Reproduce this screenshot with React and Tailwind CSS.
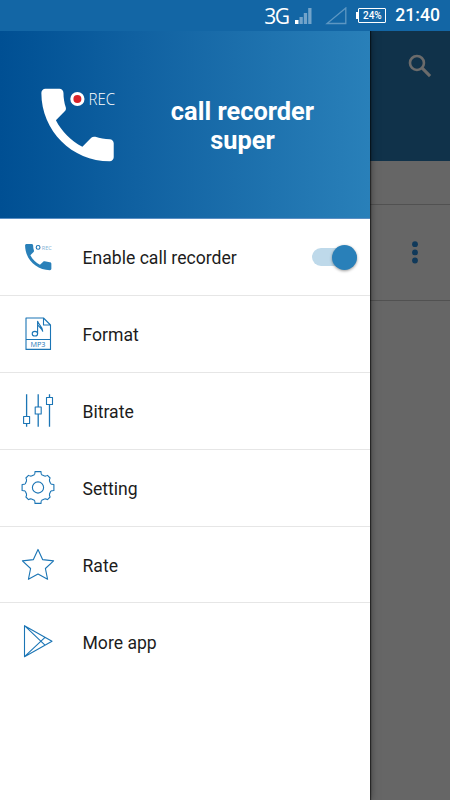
import React, { useState } from "react";

const PHONE =
  "M6.62 10.79c1.44 2.83 3.76 5.14 6.59 6.59l2.2-2.2c.27-.27.67-.36 1.02-.24 1.12.37 2.33.57 3.57.57.55 0 1 .45 1 1V20c0 .55-.45 1-1 1-9.39 0-17-7.61-17-17 0-.55.45-1 1-1h3.5c.55 0 1 .45 1 1 0 1.25.2 2.45.57 3.57.11.35.03.74-.25 1.02l-2.2 2.2z";

function RowIcon({ children }) {
  return (
    <svg width="36" height="36" viewBox="0 0 36 36" fill="none" stroke="#1b75b5" strokeWidth="1.1" strokeLinejoin="round" className="ml-5 shrink-0">
      {children}
    </svg>
  );
}

function CallIcon() {
  return (
    <RowIcon>
      <path transform="translate(0.7 0.5) scale(1.46)" d={PHONE} fill="#2980b9" stroke="none" />
      <circle cx="18.1" cy="8.4" r="1.9" strokeWidth="1.1" />
      <text x="21.8" y="10.5" fontSize="6" textLength="10" lengthAdjust="spacingAndGlyphs" fill="#7fb2d6" stroke="none" className="font-['Open_Sans',sans-serif]">REC</text>
    </RowIcon>
  );
}

function FormatIcon() {
  return (
    <RowIcon>
      <path d="M6 2h17.5l7 7v24.4H6zM23.5 2v7h7M6 23.5h24.5" />
      <path d="M17.6 17.6V5.2c.6 3.6 5.4 5 5.2 10.4M17.6 8.6c1.4 2.6 4.4 3.6 5.2 7" />
      <ellipse cx="14.9" cy="17.7" rx="2.7" ry="2.3" />
      <text x="10.5" y="31.3" fontSize="7.8" textLength="15" lengthAdjust="spacingAndGlyphs" fill="#1b75b5" stroke="none" className="font-['Open_Sans',sans-serif]">MP3</text>
    </RowIcon>
  );
}

function BitrateIcon() {
  return (
    <RowIcon>
      <path strokeWidth="1.3" d="M6.6 1.3v22.2m0 7v3.2M18.2 1.3V14m0 7v12.7M29.5 1.3v3.2m0 7v22.2" />
      <path d="M3.6 23.5h6v7h-6zM15.2 14h6v7h-6zM26.5 4.5h6v7h-6z" />
    </RowIcon>
  );
}

function SettingIcon() {
  return (
    <RowIcon>
      {[0, 90, 180, 270].map((a) => (
        <path
          key={a}
          transform={`rotate(${a} 18 17.5)`}
          d="M14.3 4.8Q15 4.4 15 1.6H21Q21 4.4 21.7 4.8L24.5 6Q26 6.3 27.5 5.4L30.1 8Q29.2 9.5 29.5 11L30.7 13.8"
        />
      ))}
      <circle cx="18" cy="17.5" r="5.6" />
    </RowIcon>
  );
}

function RateIcon() {
  return (
    <RowIcon>
      <path d="M18 2.4l4.6 10.2 11 1.3-8.2 7.6 2.2 10.8L18 27l-9.6 5.3 2.2-10.8-8.2-7.6 11-1.3z" />
    </RowIcon>
  );
}

function MoreIcon() {
  return (
    <RowIcon>
      <path d="M4.5 1.7v31L32 17.2zL25 21.2M4.5 32.7L25 13.3" />
    </RowIcon>
  );
}

const ITEMS = [
  { label: "Enable call recorder", Icon: CallIcon, toggle: true },
  { label: "Format", Icon: FormatIcon },
  { label: "Bitrate", Icon: BitrateIcon },
  { label: "Setting", Icon: SettingIcon },
  { label: "Rate", Icon: RateIcon },
  { label: "More app", Icon: MoreIcon },
];

function StatusBar() {
  return (
    <div className="h-[31px] bg-[#1366a5] flex items-center justify-end pr-[10px] text-white shrink-0">
      <span className="w-[25px] text-[21px] leading-[30px] tracking-[-1.5px] whitespace-nowrap font-['Open_Sans',sans-serif]">3G</span>
      <svg width="18" height="18" viewBox="0 0 18 18" className="ml-[6px]">
        <path d="M0 13h3.5v4H0z" fill="#fff" />
        <path d="M4.5 10h3.3v7H4.5zM8.8 6h3.3v11H8.8zM13.2 1h3.3v16h-3.3z" fill="#72a3ca" />
      </svg>
      <svg width="22" height="18" viewBox="0 0 22 18" className="ml-[12px]" fill="none" stroke="#5d97c3" strokeWidth="1.3">
        <path d="M2 16.5H20.8V1z" />
      </svg>
      <div className="ml-[9px] w-[2px] h-[7px] bg-white" />
      <div className="w-[28px] h-[15px] border border-white rounded-[1px] flex items-center justify-center text-[10px] font-medium">24%</div>
      <span className="ml-[9px] pt-px text-[17.6px] leading-none font-medium">21:40</span>
    </div>
  );
}

function Toggle({ on, onClick }) {
  return (
    <button onClick={onClick} aria-pressed={on} className="ml-auto mr-[13px] w-[45px] h-[26px] flex items-center">
      <span className="w-full h-[18px] rounded-full bg-[#bed9ea] flex items-center justify-end">
        <span className="size-[25px] rounded-full bg-[#2980b9] shadow-[0_1px_3px_rgba(0,0,0,0.4)]" />
      </span>
    </button>
  );
}

function Drawer() {
  const [enabled, setEnabled] = useState(true);

  return (
    <aside className="w-[370px] shrink-0 bg-white shadow-[0_0_1px_1px_rgba(0,0,0,0.5),0_0_8px_rgba(0,0,0,0.5)] z-10">
      <div className="h-[188px] bg-linear-to-r from-[#004f93] to-[#2980b9] border-b border-[#5b8fc4] flex">
        <svg width="125" height="187" viewBox="0 0 125 187" className="shrink-0">
          <path transform="translate(29.3 45.8) scale(4.02)" d={PHONE} fill="#fff" />
          <circle cx="77.4" cy="68" r="7.1" fill="#fff" />
          <circle cx="77.4" cy="68" r="4" fill="#d8232a" />
          <text x="88.6" y="73.8" fontSize="16" textLength="26.6" lengthAdjust="spacingAndGlyphs" fill="#fff" className="font-['Open_Sans',sans-serif] font-light">REC</text>
        </svg>
        <h1 className="w-[160px] ml-[37.5px] pt-[66px] text-center text-[25.4px] leading-[29px] font-bold text-white">
          call recorder super
        </h1>
      </div>
      <ul>
        {ITEMS.map(({ label, Icon, toggle }) => (
          <li key={label} className="h-[76.88px] pt-px flex items-center border-b border-[#e6e6e6] last:border-0">
            <Icon />
            <span className="ml-[26.5px] pt-[1.8px] text-[17.6px] text-[#1c1c1c]">{label}</span>
            {toggle && <Toggle on={enabled} onClick={() => setEnabled(!enabled)} />}
          </li>
        ))}
      </ul>
    </aside>
  );
}

function DimmedPage() {
  return (
    <div className="flex-1 bg-[#666]">
      <div className="h-[130px] bg-[#10324a] flex justify-end pr-[17px] pt-[23px]">
        <svg width="25" height="25" viewBox="0 0 24 24" fill="none" stroke="#6b6b6b" strokeWidth="2.5">
          <circle cx="8.6" cy="8.6" r="6.7" />
          <path d="M13.4 13.4l7.8 7.8" strokeWidth="3" />
        </svg>
      </div>
      <div className="h-[44px] border-b border-[#515151]" />
      <div className="h-[96px] border-b border-[#515151] pl-[42px] pt-[36px]">
        <svg width="6" height="24" viewBox="0 0 6 24" fill="#10395a">
          <circle cx="3" cy="3.2" r="2.9" />
          <circle cx="3" cy="11.4" r="2.9" />
          <circle cx="3" cy="19.5" r="2.9" />
        </svg>
      </div>
    </div>
  );
}

export default function App() {
  return (
    <div className="w-[450px] h-[800px] flex flex-col overflow-hidden font-[Roboto,sans-serif]">
      <StatusBar />
      <div className="flex-1 flex overflow-hidden">
        <Drawer />
        <DimmedPage />
      </div>
    </div>
  );
}
